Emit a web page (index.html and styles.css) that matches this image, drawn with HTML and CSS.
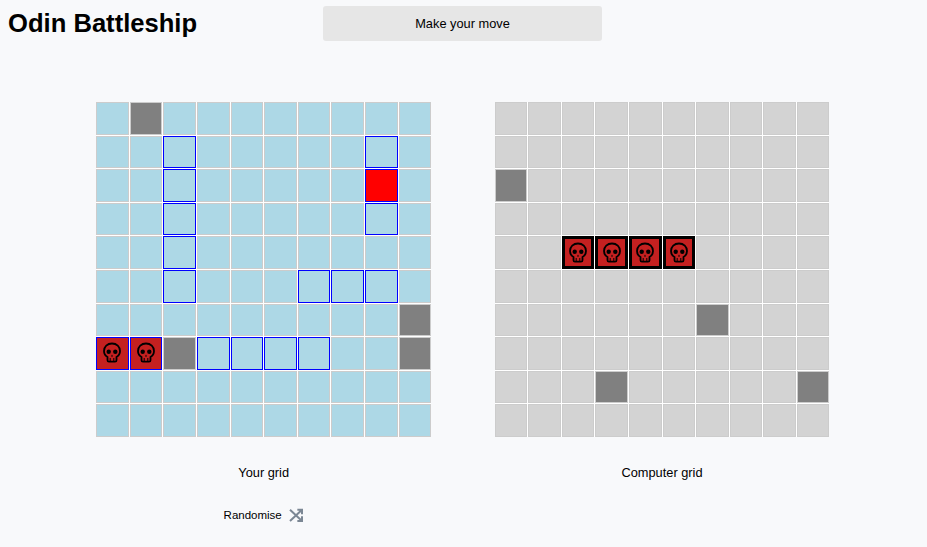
FILE: index.html
```html
<!DOCTYPE html>
<html lang="en">
<head>
    <meta charset="UTF-8">
    <title>Odin Battleship</title>
    <link rel="stylesheet" href="styles.css">
</head>
<body>
    <svg class="defs" width="0" height="0">
        <symbol id="skull" viewBox="0 0 24 24">
            <path class="skull-bone" d="M12 2.500C7.300 2.500 4 5.800 4 10c0 2.700 1.300 4.800 3.500 6v3.200A1.500 1.500 0 0 0 9 20.700h6a1.500 1.500 0 0 0 1.500-1.500V16c2.200-1.200 3.500-3.300 3.500-6 0-4.200-3.300-7.500-8-7.500z"/>
            <path class="skull-line" d="M10.200 17v3.500M13.800 17v3.500"/>
            <circle cx="8.700" cy="10.800" r="2.200"/>
            <circle cx="15.300" cy="10.800" r="2.200"/>
            <path d="M12 13.600l1 2h-2z"/>
        </symbol>
    </svg>

    <header class="top">
        <h1>Odin Battleship</h1>
        <div class="message">Make your move</div>
    </header>

    <main class="boards">
        <section class="board">
            <div class="grid" id="player-grid"></div>
            <p class="grid-name">Your grid</p>
            <button class="randomise">
                Randomise
                <svg class="shuffle" viewBox="0 0 24 24" width="16" height="16">
                    <path d="M3 4l18 17M21 4L3 21M14 4h7v7M14 21h7v-7"/>
                </svg>
            </button>
        </section>
        <section class="board">
            <div class="grid" id="computer-grid"></div>
            <p class="grid-name">Computer grid</p>
        </section>
    </main>

    <script src="script.js"></script>
</body>
</html>
```

FILE: styles.css
```css
* {
    box-sizing: border-box;
}
body {
    font-family: "Liberation Sans", Arial, sans-serif;
    background-color: #f8f9fb;
    color: #000;
    margin: 0;
    height: 547px;
    overflow: hidden;
}
.defs {
    position: absolute;
}
.top {
    display: flex;
    align-items: flex-start;
    height: 102px;
    padding-top: 6px;
}
h1 {
    font-size: 25.6px;
    line-height: 35px;
    margin: 0 0 0 8px;
    width: 315px;
}
.message {
    width: 279px;
    height: 35px;
    line-height: 35px;
    background-color: #e6e6e6;
    border-radius: 3px;
    text-align: center;
    font-size: 12.8px;
}
.boards {
    display: flex;
    gap: 63.5px;
    padding-left: 96.2px;
}
.board {
    width: 335px;
    display: flex;
    flex-direction: column;
}
.board + .board {
    width: 334.7px;
}
.grid {
    display: grid;
    grid-template-columns: repeat(10, 1fr);
    grid-template-rows: repeat(10, 1fr);
    gap: 1px;
    height: 335px;
    background-color: #fff;
}
.cell {
    border: 1px solid #ccc;
    background-color: lightblue;
    display: flex;
    align-items: center;
    justify-content: center;
}
#computer-grid .cell {
    background-color: lightgray;
}
.cell.ship {
    border-color: blue;
}
.cell.miss, #computer-grid .cell.miss {
    background-color: gray;
}
.cell.selected {
    background-color: red;
}
.cell.hit {
    background-color: #c42020;
}
#computer-grid .cell.hit {
    background-color: #c42020;
    border: 3px solid #000;
}
.cell svg {
    width: 24px;
    height: 24px;
}
.skull-bone {
    fill: none;
    stroke: #000;
    stroke-width: 1.8;
}
.skull-line {
    fill: none;
    stroke: #000;
    stroke-width: 1;
}
.grid-name {
    text-align: center;
    font-size: 12.8px;
    line-height: 14px;
    margin: 29px 0 0;
}
.randomise {
    display: flex;
    align-items: center;
    gap: 6px;
    align-self: center;
    margin-top: 27px;
    padding: 0;
    border: none;
    background: none;
    font-family: inherit;
    font-size: 11.5px;
    color: #000;
    cursor: pointer;
}
.shuffle {
    fill: none;
    stroke: #7b8794;
    stroke-width: 3;
}
```

FILE: script.js
```js
// row * 10 + col
const playerShips = [12, 18, 22, 28, 32, 38, 42, 52, 56, 57, 58, 70, 71, 73, 74, 75, 76];
const playerMiss = [1, 69, 72, 79];
const playerHit = [70, 71];
const computerMiss = [20, 66, 83, 89];
const computerHit = [42, 43, 44, 45];

function buildGrid(id, ships, miss, hit, selected) {
    const grid = document.getElementById(id);
    for (let i = 0; i < 100; i++) {
        const cell = document.createElement('div');
        cell.className = 'cell';
        if (ships.includes(i)) cell.classList.add('ship');
        if (miss.includes(i)) cell.classList.add('miss');
        if (i === selected) cell.classList.add('selected');
        if (hit.includes(i)) {
            cell.classList.add('hit');
            cell.innerHTML = '<svg><use href="#skull"></use></svg>';
        }
        grid.appendChild(cell);
    }
}

buildGrid('player-grid', playerShips, playerMiss, playerHit, 28);
buildGrid('computer-grid', [], computerMiss, computerHit);
```
